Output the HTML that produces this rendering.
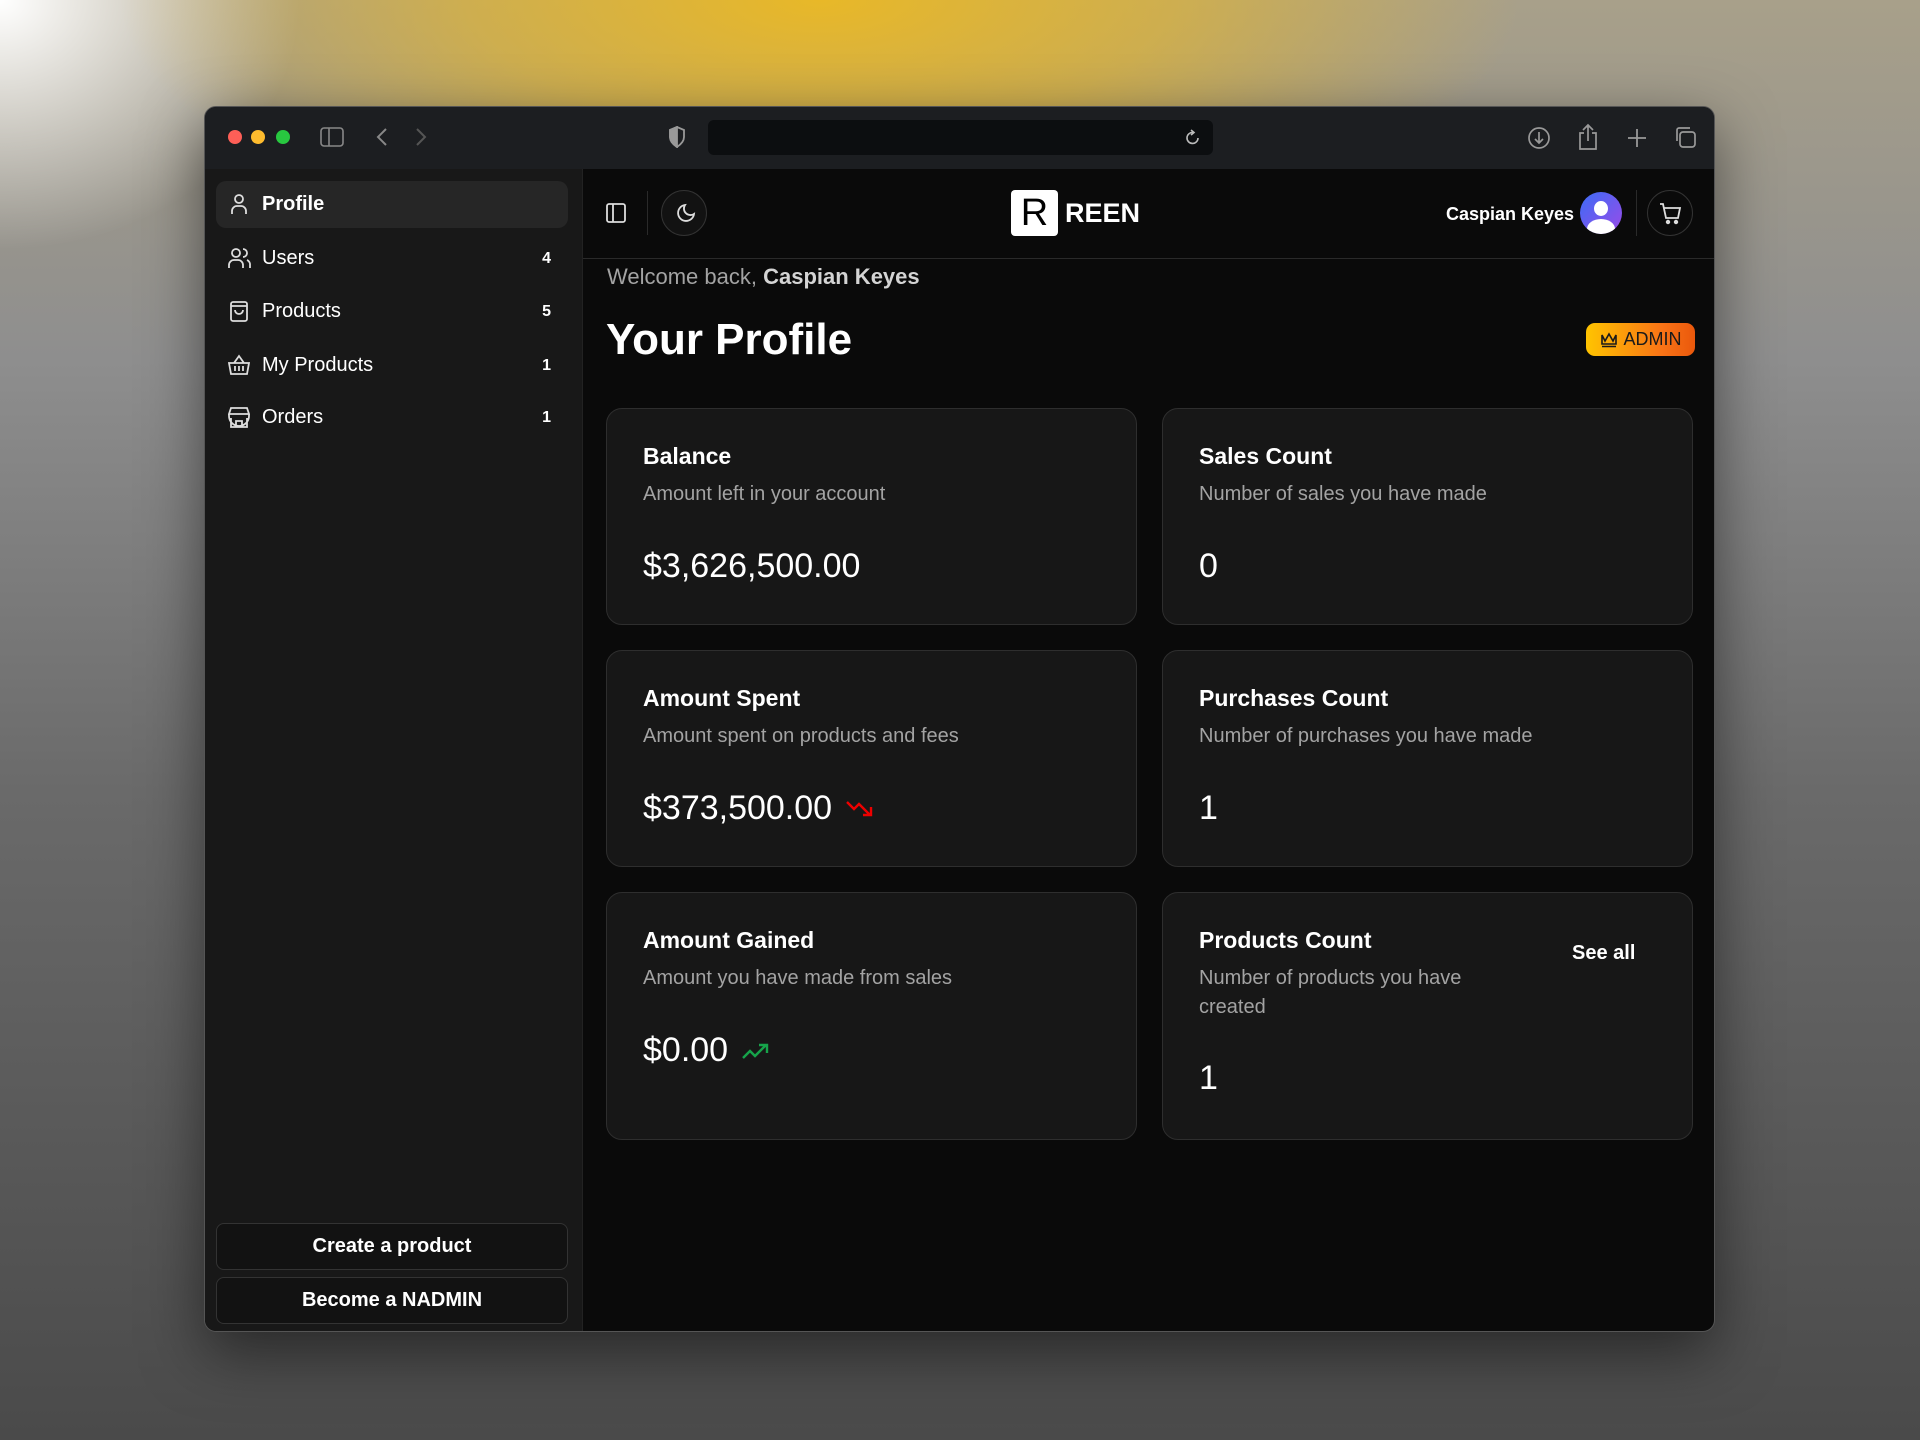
<!DOCTYPE html>
<html><head><meta charset="utf-8"><style>
*{box-sizing:border-box;margin:0;padding:0}
body{width:1920px;height:1440px;overflow:hidden;font-family:"Liberation Sans",sans-serif;
background:radial-gradient(ellipse 700px 260px at 820px 0px,#e8b828 0%,rgba(232,184,40,.6) 50%,rgba(232,184,40,0) 100%),
radial-gradient(ellipse 300px 250px at 0 0,#fff 0%,rgba(255,255,255,0) 100%),
linear-gradient(180deg,#a8a08a 0%,#8e8e8e 25%,#6a6a6a 55%,#4a4a4a 100%);position:relative}
.win{position:absolute;left:204px;top:106px;width:1511px;height:1226px;background:#0a0a0a;border-radius:12px;overflow:hidden;border:1px solid #555;box-shadow:0 20px 60px rgba(0,0,0,.5)}
.tb{position:absolute;left:0;top:0;width:100%;height:62px;background:#1c1e21}
.dot{position:absolute;top:23px;width:14px;height:14px;border-radius:50%}
.url{position:absolute;left:503px;top:13px;width:505px;height:35px;background:#0c0e10;border-radius:6px}
.side{position:absolute;left:0;top:62px;width:378px;bottom:0;background:#181818;border-right:1px solid #222}
.item{position:absolute;left:11px;width:352px;height:47px;border-radius:10px;color:#fff;font-size:20px;display:flex;align-items:center;padding-left:46px}
.item.act{background:#262626}
.item svg{position:absolute;left:12px;top:12px}
.item .n{position:absolute;right:17px;font-size:16px;font-weight:bold}
.btn{position:absolute;left:11px;width:352px;height:47px;border:1px solid #333;border-radius:8px;background:#121212;color:#fff;font-size:20px;font-weight:bold;display:flex;align-items:center;justify-content:center}
.hdr{position:absolute;left:378px;top:62px;right:0;height:90px;border-bottom:1px solid #2a2a2a}
.main{position:absolute;left:378px;top:152px;right:0;bottom:0}
.card{position:absolute;width:531px;background:#171717;border:1px solid #2e2e2e;border-radius:16px;padding:34px 36px}
.card h3{color:#fff;font-size:23px;font-weight:bold;margin-bottom:10px}
.card p{color:#a3a3a3;font-size:20px;line-height:29px}
.card .v{position:absolute;left:36px;color:#fff;font-size:34px;display:flex;align-items:center;gap:14px}
</style></head><body>
<div class="win">
 <div class="tb">
  <div class="dot" style="left:23px;background:#fe5f57"></div>
  <div class="dot" style="left:46px;background:#febc2e"></div>
  <div class="dot" style="left:71px;background:#28c840"></div>
  <svg style="position:absolute;left:115px;top:19px" width="24" height="22" viewBox="0 0 24 22" fill="none" stroke="#888" stroke-width="1.6"><rect x="1" y="2" width="22" height="18" rx="3"/><line x1="9" y1="2" x2="9" y2="20"/></svg>
  <svg style="position:absolute;left:170px;top:20px" width="14" height="20" fill="none" stroke="#888" stroke-width="2"><path d="M11 2 L3 10 L11 18"/></svg>
  <svg style="position:absolute;left:209px;top:20px" width="14" height="20" fill="none" stroke="#555" stroke-width="2"><path d="M3 2 L11 10 L3 18"/></svg>
  <svg style="position:absolute;left:463px;top:19px" width="18" height="22" fill="none" stroke="#999" stroke-width="1.8"><path d="M9 1 L16 4 V11 C16 16 12 19 9 21 C6 19 2 16 2 11 V4 Z"/><path d="M9 1 V21 C6 19 2 16 2 11 V4Z" fill="#999"/></svg>
  <div class="url"><svg style="position:absolute;right:12px;top:9px" width="16" height="18" fill="none" stroke="#bbb" stroke-width="1.6"><path d="M13 9 A5.5 5.5 0 1 1 8 3.5"/><path d="M6 1 L9 3.5 L6 6"/></svg></div>
  <svg style="position:absolute;left:1322px;top:19px" width="24" height="24" fill="none" stroke="#999" stroke-width="1.7"><circle cx="12" cy="12" r="10"/><path d="M12 6V17M8 13l4 4 4-4"/></svg>
  <svg style="position:absolute;left:1372px;top:16px" width="22" height="28" fill="none" stroke="#999" stroke-width="1.7"><path d="M7 10H3V26H19V10H15M11 18V2M6 7l5-5 5 5"/></svg>
  <svg style="position:absolute;left:1421px;top:20px" width="22" height="22" stroke="#999" stroke-width="1.8"><path d="M11 2V20M2 11H20"/></svg>
  <svg style="position:absolute;left:1468px;top:18px" width="24" height="24" fill="none" stroke="#999" stroke-width="1.7"><rect x="7" y="7" width="15" height="15" rx="3"/><path d="M4 16V5a2 2 0 0 1 2-2h11"/></svg>
 </div>
 <div class="side">
  <div class="item act" style="top:12px;font-weight:bold"><svg width="22" height="22" fill="none" stroke="#ddd" stroke-width="1.8"><circle cx="11" cy="6" r="4"/><path d="M4 21v-3a5 5 0 0 1 5-5h4a5 5 0 0 1 5 5v3"/></svg>Profile</div>
  <div class="item" style="top:66px"><svg width="24" height="22" fill="none" stroke="#ddd" stroke-width="1.8"><circle cx="8" cy="6" r="4"/><path d="M1 21v-3a5 5 0 0 1 5-5h4a5 5 0 0 1 5 5v3M15 2a4 4 0 0 1 0 8M19 13a5 5 0 0 1 3 5v3"/></svg>Users<span class="n">4</span></div>
  <div class="item" style="top:119px"><svg width="22" height="22" fill="none" stroke="#ddd" stroke-width="1.8"><rect x="3" y="2" width="16" height="19" rx="2"/><path d="M3 6H19M7 10a4 4 0 0 0 8 0"/></svg>Products<span class="n">5</span></div>
  <div class="item" style="top:173px"><svg width="22" height="22" fill="none" stroke="#ddd" stroke-width="1.8"><path d="M6 9L11 2L16 9M1 9H21L19 20H3Z M7 12v5M11 12v5M15 12v5"/></svg>My Products<span class="n">1</span></div>
  <div class="item" style="top:225px"><svg width="22" height="22" fill="none" stroke="#ddd" stroke-width="1.8"><path d="M3 2H19L21 8H1Z M1 8v2a3 3 0 0 0 20 0V8 M3 12V21H19V12 M8 21v-6h6v6"/></svg>Orders<span class="n">1</span></div>
  <div class="btn" style="top:1054px">Create a product</div>
  <div class="btn" style="top:1108px">Become a NADMIN</div>
 </div>
 <div class="hdr">
  <svg style="position:absolute;left:23px;top:34px" width="20" height="20" fill="none" stroke="#ddd" stroke-width="1.8"><rect x="1" y="1" width="18" height="18" rx="2"/><line x1="7" y1="1" x2="7" y2="19"/></svg>
  <div style="position:absolute;left:64px;top:22px;width:1px;height:44px;background:#2a2a2a"></div>
  <div style="position:absolute;left:78px;top:21px;width:46px;height:46px;border-radius:50%;border:1px solid #333;background:#121212"><svg style="position:absolute;left:12px;top:12px" width="22" height="22" fill="none" stroke="#ddd" stroke-width="1.8"><path d="M11 2a8 8 0 1 0 9 9 6.5 6.5 0 0 1-9-9z"/></svg></div>
  <div style="position:absolute;left:428px;top:21px;width:47px;height:46px;background:#fff;border-radius:4px;color:#000;font-size:38px;text-align:center;line-height:46px">R</div>
  <div style="position:absolute;left:482px;top:24px;color:#fff;font-size:27px;font-weight:bold;line-height:40px">REEN</div>
  <div style="position:absolute;left:863px;top:32px;color:#fff;font-size:18px;font-weight:bold;line-height:26px;white-space:nowrap">Caspian Keyes</div>
  <div style="position:absolute;left:997px;top:23px;width:42px;height:42px;border-radius:50%;background:linear-gradient(135deg,#3b6cf6,#9b4be8);overflow:hidden"><div style="position:absolute;left:14px;top:9px;width:14px;height:15px;border-radius:50%;background:#fff"></div><div style="position:absolute;left:7px;top:27px;width:28px;height:20px;border-radius:50%;background:#fff"></div></div>
  <div style="position:absolute;left:1053px;top:21px;width:1px;height:46px;background:#2a2a2a"></div>
  <div style="position:absolute;left:1064px;top:21px;width:46px;height:46px;border-radius:50%;border:1px solid #333"><svg style="position:absolute;left:11px;top:11px" width="24" height="24" fill="none" stroke="#ddd" stroke-width="1.8"><path d="M1 2H4L7 16H19L21 6H5"/><circle cx="9" cy="20" r="1.3" fill="#ddd"/><circle cx="17" cy="20" r="1.3" fill="#ddd"/></svg></div>
 </div>
 <div class="main">
  <div style="position:absolute;left:24px;top:5px;color:#a3a3a3;font-size:22px">Welcome back, <b style="color:#d4d4d4">Caspian Keyes</b></div>
  <div style="position:absolute;left:23px;top:56px;color:#fff;font-size:44px;font-weight:bold">Your Profile</div>
  <div style="position:absolute;left:1003px;top:64px;width:109px;height:33px;border-radius:9px;background:linear-gradient(90deg,#ffc400,#f97316 70%,#ea580c);color:#1a1a1a;font-size:18px;display:flex;align-items:center;justify-content:center;gap:6px">
   <svg width="18" height="16" fill="none" stroke="#1a1a1a" stroke-width="1.6"><path d="M2 3L5 9L9 2L13 9L16 3V12H2Z M2 14.5H16"/></svg>ADMIN</div>
  <div class="card" style="left:23px;top:149px;height:217px"><h3>Balance</h3><p>Amount left in your account</p><div class="v" style="top:138px">$3,626,500.00</div></div>
  <div class="card" style="left:579px;top:149px;height:217px"><h3>Sales Count</h3><p>Number of sales you have made</p><div class="v" style="top:138px">0</div></div>
  <div class="card" style="left:23px;top:391px;height:217px"><h3>Amount Spent</h3><p>Amount spent on products and fees</p><div class="v" style="top:138px">$373,500.00<svg width="34" height="22" fill="none" stroke="#e00" stroke-width="2.4"><path d="M1 4L8 11L13 6L24 17M17 17H25V9"/></svg></div></div>
  <div class="card" style="left:579px;top:391px;height:217px"><h3>Purchases Count</h3><p>Number of purchases you have made</p><div class="v" style="top:138px">1</div></div>
  <div class="card" style="left:23px;top:633px;height:248px"><h3>Amount Gained</h3><p>Amount you have made from sales</p><div class="v" style="top:138px">$0.00<svg width="34" height="22" fill="none" stroke="#16a34a" stroke-width="2.4"><path d="M1 18L8 11L13 16L24 5M17 5H25V13"/></svg></div></div>
  <div class="card" style="left:579px;top:633px;height:248px"><h3>Products Count</h3><p style="width:300px">Number of products you have created</p><div class="v" style="top:166px">1</div><div style="position:absolute;left:409px;top:49px;color:#fff;font-size:20px;font-weight:bold">See all</div></div>
 </div>
</div>
</body></html>
